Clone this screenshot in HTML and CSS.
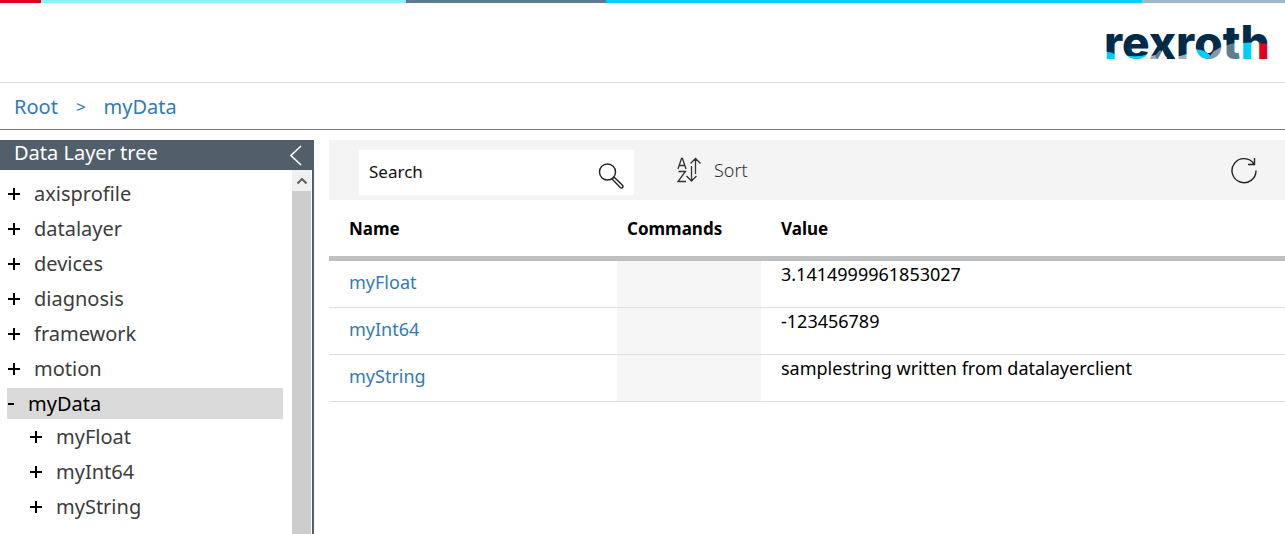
FILE: index.html
```html
<!DOCTYPE html>
<html lang="en">
<head>
<meta charset="utf-8">
<title>Data Layer</title>
<link rel="stylesheet" href="styles.css">
</head>
<body>
<div class="supergraphic"></div>
<header class="header">
  <svg class="logo" width="172" height="56" viewBox="-2 -6 172 56" role="img" aria-label="rexroth">
    <defs>
      <pattern id="brand" patternUnits="userSpaceOnUse" x="-2" y="-6" width="172" height="56" viewBox="-2 -6 172 56">
        <rect x="-2" y="-6" width="172" height="56" fill="#002b49"/>
        <path d="M-2 27Q5 28 10 30V42H-2z" fill="#00cdff"/>
        <path d="M19 31Q32 34 44 30V42H19z" fill="#00cdff"/>
        <path d="M43 33L54 30L62 33V42H43z" fill="#a0b2c1"/>
        <path d="M55 26L68 42H57L50 32z" fill="#5d7d92"/>
        <path d="M70 33Q76 32 82 30V42H70z" fill="#a0b2c1"/>
        <path d="M88 25Q99 25 105 31V42H88z" fill="#00cdff"/>
        <path d="M103 35Q108 25 121 21V42H103z" fill="#8299ac"/>
        <path d="M120 22Q130 18 138 19V42H120z" fill="#5d7d92"/>
        <path d="M138 19Q144 18 152 19V42H138z" fill="#00cdff"/>
        <path d="M152 19Q158 19 170 21V42H152z" fill="#e2001f"/>
      </pattern>
    </defs>
    <text class="logo-text" x="-1" y="35" fill="url(#brand)">rexroth</text>
  </svg>
</header>
<nav class="breadcrumb" aria-label="Breadcrumb">
  <a href="#">Root</a><span class="separator">&gt;</span><a href="#">myData</a>
</nav>
<div class="workspace">
  <aside class="sidebar">
    <div class="sidebar-head">
      <h2 class="sidebar-title">Data Layer tree</h2>
      <button class="icon-button" type="button" aria-label="Collapse tree">
        <svg width="14" height="22" viewBox="0 0 14 22"><path d="M12 2L2 11.500L12 21" fill="none" stroke="#fff" stroke-width="1.600"/></svg>
      </button>
    </div>
    <div class="sidebar-body">
      <ul class="tree">
        <li class="node"><button class="toggle" type="button" aria-label="Expand"><svg width="13" height="12"><path d="M1 6H13M7 0V12" stroke="#000" stroke-width="2"/></svg></button>axisprofile</li>
        <li class="node"><button class="toggle" type="button" aria-label="Expand"><svg width="13" height="12"><path d="M1 6H13M7 0V12" stroke="#000" stroke-width="2"/></svg></button>datalayer</li>
        <li class="node"><button class="toggle" type="button" aria-label="Expand"><svg width="13" height="12"><path d="M1 6H13M7 0V12" stroke="#000" stroke-width="2"/></svg></button>devices</li>
        <li class="node"><button class="toggle" type="button" aria-label="Expand"><svg width="13" height="12"><path d="M1 6H13M7 0V12" stroke="#000" stroke-width="2"/></svg></button>diagnosis</li>
        <li class="node"><button class="toggle" type="button" aria-label="Expand"><svg width="13" height="12"><path d="M1 6H13M7 0V12" stroke="#000" stroke-width="2"/></svg></button>framework</li>
        <li class="node"><button class="toggle" type="button" aria-label="Expand"><svg width="13" height="12"><path d="M1 6H13M7 0V12" stroke="#000" stroke-width="2"/></svg></button>motion</li>
        <li class="node node-selected"><button class="toggle" type="button" aria-label="Collapse"><svg width="7" height="12"><path d="M1 6H7" stroke="#000" stroke-width="2"/></svg></button>myData</li>
        <li class="node node-child"><button class="toggle" type="button" aria-label="Expand"><svg width="13" height="12"><path d="M1 6H13M7 0V12" stroke="#000" stroke-width="2"/></svg></button>myFloat</li>
        <li class="node node-child"><button class="toggle" type="button" aria-label="Expand"><svg width="13" height="12"><path d="M1 6H13M7 0V12" stroke="#000" stroke-width="2"/></svg></button>myInt64</li>
        <li class="node node-child"><button class="toggle" type="button" aria-label="Expand"><svg width="13" height="12"><path d="M1 6H13M7 0V12" stroke="#000" stroke-width="2"/></svg></button>myString</li>
      </ul>
      <div class="scrollbar">
        <button class="scroll-up" type="button" aria-label="Scroll up">
          <svg width="10" height="8" viewBox="0 0 10 8"><path d="M.5 6.500L5 2L9.500 6.500" fill="none" stroke="#606060" stroke-width="2"/></svg>
        </button>
        <div class="scroll-thumb"></div>
      </div>
    </div>
  </aside>
  <main class="content">
    <div class="toolbar">
      <div class="search">
        <input class="search-input" type="text" placeholder="Search" aria-label="Search">
        <button class="icon-button" type="button" aria-label="Start search">
          <svg width="26" height="26" viewBox="0 0 26 26" fill="none" stroke="#222" stroke-width="1.400"><circle cx="9.500" cy="9" r="8"/><path d="M14 16L16 14L24.500 22.300Q25.500 23.500 24.500 24.500Q23.500 25.500 22.300 24.500zM14.500 14.500L15 15"/></svg>
        </button>
      </div>
      <button class="sort" type="button">
        <svg width="24" height="26" viewBox="0 0 24 26" fill="none" stroke="#333" stroke-width="1.300"><path d="M1 12L4.500 1.500H5.500L9 12M2 8.500H8M1.500 14.500H8.500L1 24.500H9M18.500 17V2M13.500 6.500L18.500 1.500L23.500 6.500M14.500 9V23.500M9.500 19L14.500 24L19.500 19"/></svg>
        Sort
      </button>
      <button class="icon-button refresh" type="button" aria-label="Refresh">
        <svg width="28" height="28" viewBox="0 0 28 28" fill="none" stroke="#222" stroke-width="1.400"><path d="M26 14.500A12 12 0 1 1 24 8"/><path d="M24.500 2V8.500H18"/></svg>
      </button>
    </div>
    <table class="data">
      <thead>
        <tr><th class="col-name">Name</th><th class="col-commands">Commands</th><th>Value</th></tr>
      </thead>
      <tbody>
        <tr><td class="name"><a href="#">myFloat</a></td><td class="commands"></td><td class="value">3.1414999961853027</td></tr>
        <tr><td class="name"><a href="#">myInt64</a></td><td class="commands"></td><td class="value">-123456789</td></tr>
        <tr><td class="name"><a href="#">myString</a></td><td class="commands"></td><td class="value">samplestring written from datalayerclient</td></tr>
      </tbody>
    </table>
  </main>
</div>
</body>
</html>
```
FILE: styles.css
```css
* { box-sizing: border-box; }

body {
  margin: 0;
  height: 100vh;
  display: flex;
  flex-direction: column;
  overflow: hidden;
  background: #fff;
  color: #000;
  font-family: "Noto Sans", sans-serif;
  font-size: 18px;
}

a { color: #337ab7; text-decoration: none; }

button {
  padding: 0;
  border: 0;
  background: none;
  color: inherit;
  font: inherit;
  cursor: pointer;
}

svg { display: block; }

.supergraphic {
  flex: none;
  height: 3px;
  background: linear-gradient(90deg, #e2001f 41px, #90efff 41px 406px, #5b7b8f 406px 606px, #00cdff 606px 1142px, #a0b8c8 1142px);
}

.header {
  flex: none;
  display: flex;
  justify-content: flex-end;
  align-items: flex-start;
  height: 80px;
  padding: 15px 10px 0 0;
  border-bottom: 1px solid #dedede;
}

.logo-text {
  font-family: Inter, sans-serif;
  font-size: 46px;
  font-weight: 800;
}

.breadcrumb {
  flex: none;
  display: flex;
  align-items: center;
  height: 47px;
  padding: 0 14px;
  border-bottom: 1px solid #7d8083;
  font-size: 20px;
}

.separator { margin: 0 18px; color: #337ab7; font-size: 17px; }

.workspace {
  flex: 1;
  min-height: 0;
  display: flex;
  gap: 15px;
  padding-top: 10px;
}

.sidebar {
  flex: none;
  display: flex;
  flex-direction: column;
  width: 314px;
  border-right: 2px solid #525f6b;
}

.sidebar-head {
  flex: none;
  display: flex;
  align-items: center;
  justify-content: space-between;
  height: 30px;
  padding: 0 9px 0 14px;
  background: #525f6b;
  color: #fff;
}

.sidebar-title {
  margin: 0;
  padding-bottom: 4px;
  font-size: 20px;
  font-weight: 400;
  line-height: 26px;
}

.sidebar-body {
  flex: 1;
  min-height: 0;
  display: flex;
  justify-content: space-between;
  padding-right: 1px;
}

.tree {
  flex: 1;
  margin: 0;
  padding: 7px 9px 0 7px;
  list-style: none;
  overflow: hidden;
  color: #3c3c3c;
  font-size: 20px;
}

.node {
  display: flex;
  align-items: center;
  gap: 14px;
  height: 35px;
  padding-bottom: 2px;
}

.node-selected {
  height: 31px;
  margin: 1px 0;
  padding-bottom: 0;
  background: #dadada;
  color: #000;
}

.node-child { padding-left: 22px; }

.scrollbar {
  flex: none;
  display: flex;
  flex-direction: column;
  width: 19px;
}

.scroll-up {
  display: grid;
  place-items: center;
  height: 21px;
  background: #f0f0f0;
}

.scroll-thumb { flex: 1; background: #cdcdcd; }

.content { flex: 1; min-width: 0; }

.toolbar {
  display: flex;
  align-items: center;
  height: 60px;
  padding: 0 27px 0 30px;
  background: #f4f4f4;
}

.search {
  display: flex;
  align-items: center;
  width: 275px;
  height: 45px;
  padding: 0 10px;
  margin-top: 5px;
  background: #fff;
}

.search .icon-button { padding-top: 6px; }

.search-input {
  flex: 1;
  min-width: 0;
  padding: 0 0 2px;
  border: 0;
  outline: 0;
  background: none;
  color: #000;
  font-family: inherit;
  font-size: 17px;
}

.search-input::placeholder { color: #111; opacity: 1; }

.sort {
  display: flex;
  align-items: center;
  gap: 13px;
  margin-left: 43px;
  color: #333;
  font-weight: 300;
}

.refresh { margin-left: auto; }

.data {
  width: 100%;
  border-collapse: separate;
  border-spacing: 0;
  table-layout: fixed;
}

.data th {
  height: 61px;
  padding: 0 20px;
  border-bottom: 5px solid #bfc0c2;
  font-size: 17px;
  text-align: left;
}

.data th.col-name { width: 288px; }

.data th.col-commands { width: 144px; padding: 0 10px; }

.data td {
  height: 47px;
  padding: 0 20px;
  border-bottom: 1px solid #dedede;
}

.data td.name { padding-bottom: 4px; }

.data td.commands { background: #f6f6f6; }

.data td.value { vertical-align: top; line-height: 26px; }
```
